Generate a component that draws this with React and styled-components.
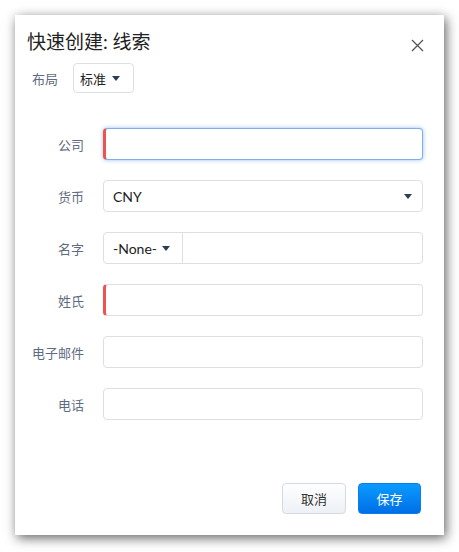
import React from "react";
import styled, { createGlobalStyle } from "styled-components";

const Global = createGlobalStyle`
  html, body { margin: 0; padding: 0; background: #fff; }
  body { font-family: Lato, "Noto Sans CJK SC", sans-serif; }
  * { box-sizing: border-box; }
`;

const Page = styled.div`
  padding: 15px 0 0 15px;
  width: 459px;
  height: 552px;
`;

const Panel = styled.div`
  width: 429px;
  height: 520px;
  background: #fff;
  box-shadow: 2px 3px 11px rgba(0, 0, 0, 0.62);
  display: flex;
  flex-direction: column;
  padding: 13px 20px 21px 12px;
`;

const Header = styled.div`
  display: flex;
  align-items: center;
  justify-content: space-between;
`;

const Title = styled.h1`
  margin: 0;
  font-size: 19px;
  line-height: 28px;
  font-weight: 400;
  color: #222;
`;

const Close = styled.button`
  border: 0;
  background: none;
  padding: 0;
  width: 13px;
  height: 13px;
  margin-top: 6px;
  display: flex;
  cursor: pointer;
`;

const LayoutRow = styled.div`
  display: flex;
  align-items: center;
  gap: 15px;
  margin-top: 7px;
  padding-left: 5px;
`;

const Label = styled.label`
  font-size: 13px;
  color: #5f6b80;
  white-space: nowrap;
`;

const Caret = styled.span`
  display: inline-block;
  width: 0;
  height: 0;
  border-left: 4px solid transparent;
  border-right: 4px solid transparent;
  border-top: 5px solid #2c3e55;
`;

const SmallSelect = styled.div`
  width: 61px;
  height: 30px;
  border: 1px solid #dcdfe6;
  border-radius: 4px;
  display: flex;
  align-items: center;
  justify-content: space-between;
  padding: 0 13px 0 6px;
  font-size: 13px;
  color: #222;
`;

const Form = styled.div`
  display: grid;
  grid-template-columns: 69px 1fr;
  column-gap: 19px;
  row-gap: 20px;
  margin-top: 35px;
  margin-left: -12px;
  margin-right: 1px;
  align-items: center;
`;

const FieldLabel = styled(Label)`
  text-align: right;
`;

const Input = styled.div`
  height: 32px;
  border: 1px solid ${(p) => (p.$focus ? "#7fb0ee" : "#dcdfe6")};
  border-left: ${(p) => (p.$required ? "3px solid #f0524f" : `1px solid ${p.$focus ? "#7fb0ee" : "#dcdfe6"}`)};
  border-radius: 4px;
  box-shadow: ${(p) => (p.$focus ? "0 0 4px rgba(80, 150, 240, 0.6)" : "none")};
  background: #fff;
`;

const Select = styled.div`
  height: 32px;
  border: 1px solid #dcdfe6;
  border-radius: 4px;
  display: flex;
  align-items: center;
  justify-content: space-between;
  padding: 0 10px 0 9px;
  font-size: 14px;
  color: #222;
`;

const Split = styled.div`
  height: 32px;
  border: 1px solid #dcdfe6;
  border-radius: 4px;
  display: flex;
`;

const SplitSelect = styled.div`
  width: 79px;
  border-right: 1px solid #dcdfe6;
  display: flex;
  align-items: center;
  justify-content: space-between;
  padding: 0 12px 0 9px;
  font-size: 14px;
  color: #222;
`;

const Footer = styled.div`
  margin-top: auto;
  display: flex;
  justify-content: flex-end;
  gap: 12px;
  padding-right: 3px;
`;

const Button = styled.button`
  height: 31px;
  width: ${(p) => (p.$primary ? "63px" : "64px")};
  border-radius: 4px;
  font-family: inherit;
  font-size: 13px;
  cursor: pointer;
  border: 1px solid ${(p) => (p.$primary ? "#0a7de8" : "#d4d9e3")};
  color: ${(p) => (p.$primary ? "#fff" : "#333")};
  background: ${(p) =>
    p.$primary
      ? "linear-gradient(#0a9bff, #006fe6)"
      : "linear-gradient(#ffffff, #edf0f6)"};
`;

export default function App() {
  return (
    <>
      <Global />
      <Page>
        <Panel>
          <Header>
            <Title>快速创建: 线索</Title>
            <Close aria-label="关闭">
              <svg width="13" height="13" viewBox="0 0 13 13">
                <path d="M1 1 L12 12 M12 1 L1 12" stroke="#555" strokeWidth="1.3" fill="none" />
              </svg>
            </Close>
          </Header>
          <LayoutRow>
            <Label>布局</Label>
            <SmallSelect>
              <span>标准</span>
              <Caret />
            </SmallSelect>
          </LayoutRow>
          <Form>
            <FieldLabel>公司</FieldLabel>
            <Input $focus $required />
            <FieldLabel>货币</FieldLabel>
            <Select>
              <span>CNY</span>
              <Caret />
            </Select>
            <FieldLabel>名字</FieldLabel>
            <Split>
              <SplitSelect>
                <span>-None-</span>
                <Caret />
              </SplitSelect>
            </Split>
            <FieldLabel>姓氏</FieldLabel>
            <Input $required />
            <FieldLabel>电子邮件</FieldLabel>
            <Input />
            <FieldLabel>电话</FieldLabel>
            <Input />
          </Form>
          <Footer>
            <Button>取消</Button>
            <Button $primary>保存</Button>
          </Footer>
        </Panel>
      </Page>
    </>
  );
}
